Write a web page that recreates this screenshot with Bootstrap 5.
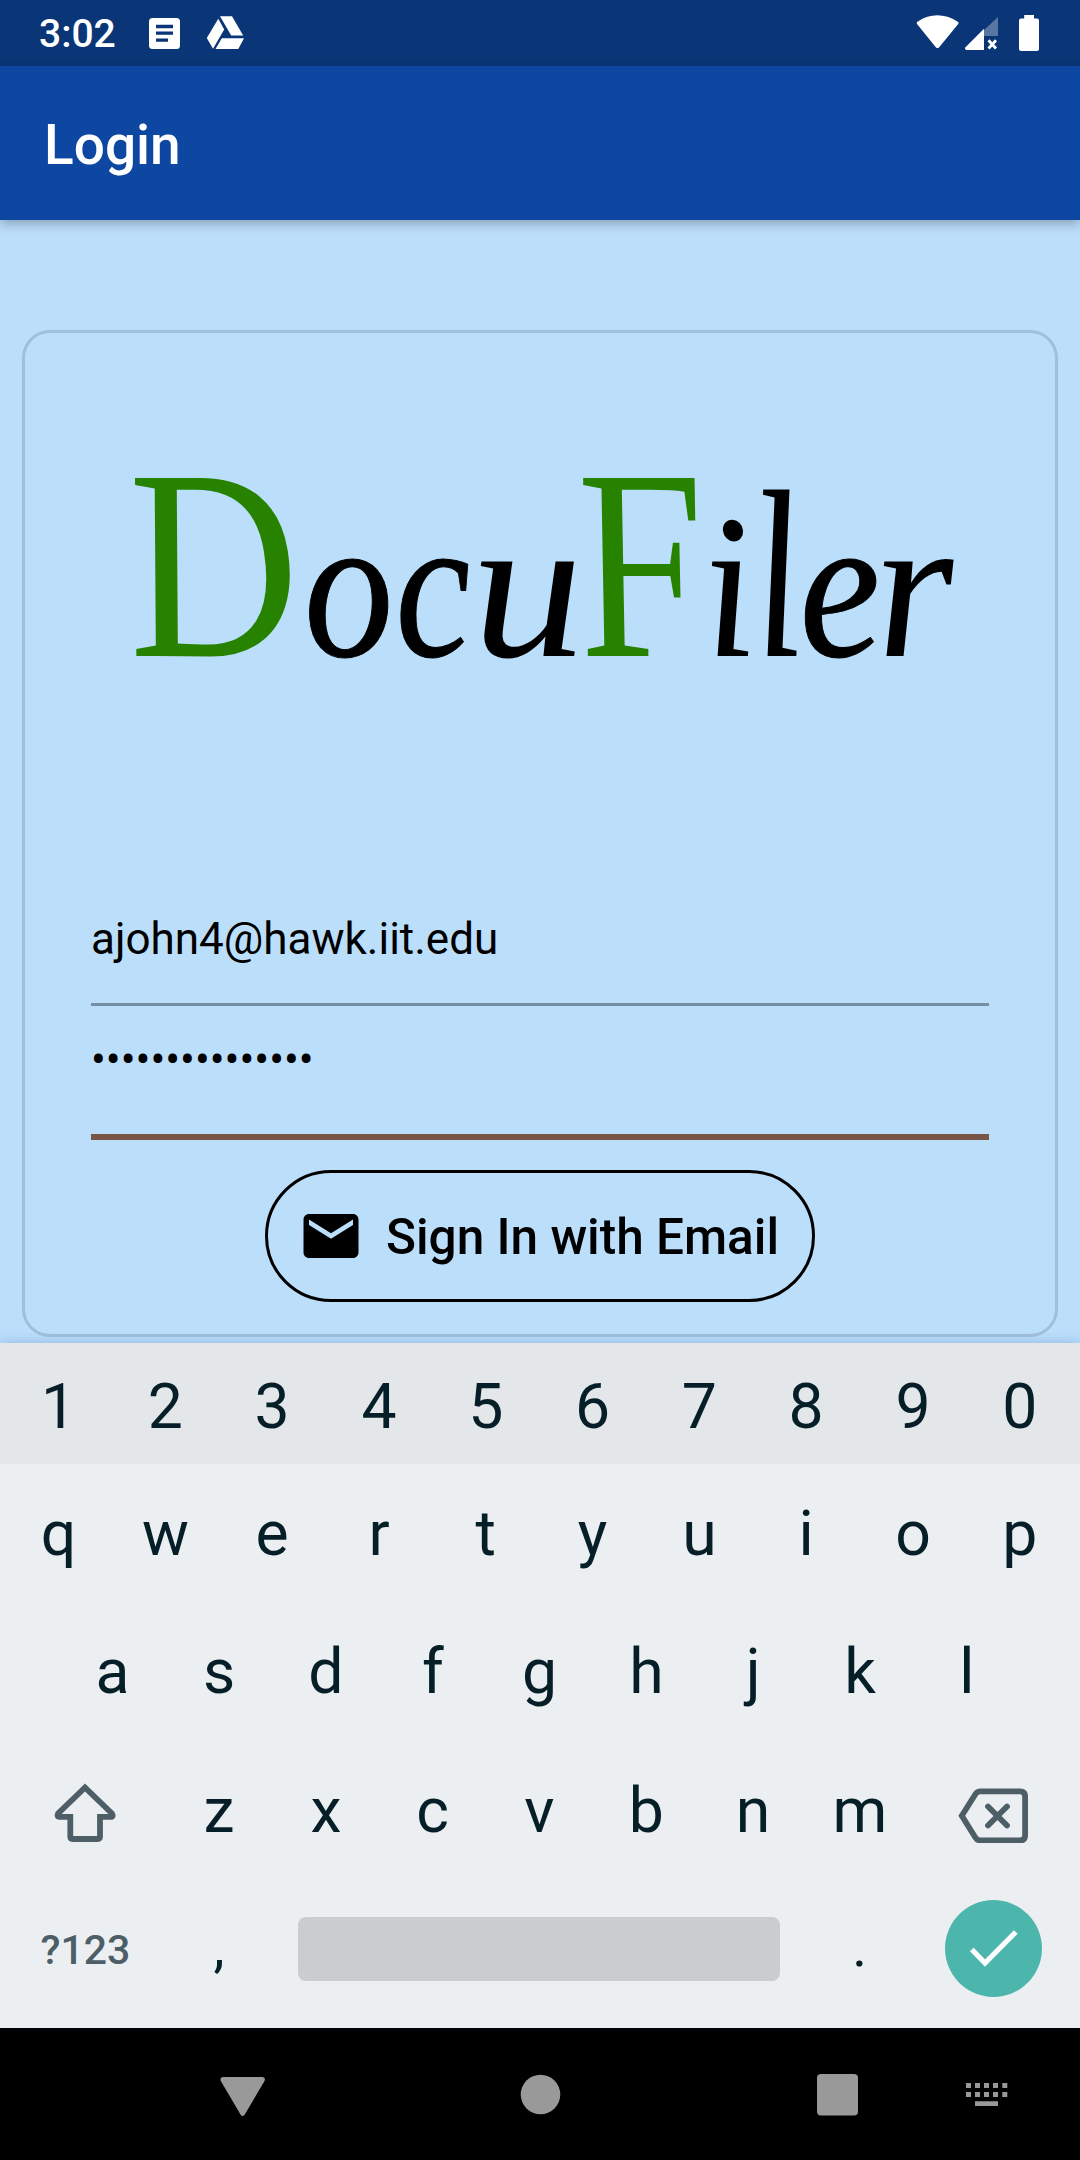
<!DOCTYPE html>
<html lang="en">
<head>
<meta charset="utf-8">
<title>Login</title>
<meta name="viewport" content="width=device-width, initial-scale=1">
<link href="https://cdn.jsdelivr.net/npm/bootstrap@5.3.0/dist/css/bootstrap.min.css" rel="stylesheet">
<style>
body{width:1080px;height:2160px;margin:0;overflow:hidden;font-family:Roboto,sans-serif;background:#bbdefb;color:#000;line-height:1.172}
svg{display:block;flex:none}
.status-bar{height:66px;background:#0a3576;padding:0 41px 0 39px}
.clock{font-size:39px;font-weight:500;width:110px;padding-top:4px}
.drive{margin-left:26px}
.app-bar{height:154px;background:#0d47a1;padding:4px 44px 0;box-shadow:0 4px 10px rgba(0,0,0,.26);z-index:1}
.app-title{font-size:55px;font-weight:500}
.screen{height:1123px;padding:110px 22px 0}
.login-card{height:1007px;border:3px solid #a0bfda;border-radius:28px;background:none;padding:0 66px}
.logo-box{height:555px;margin:0 -66px}
.field{font-size:44px;border:0;border-radius:0;background:none;padding:0;color:#000;line-height:52px;display:block;white-space:nowrap}
.field-email{height:118px;padding-top:25px;border-bottom:3px solid #768ea4}
.field-pass{height:134px;padding-top:28px;border-bottom:6px solid #795548}
.btn-email{width:550px;height:132px;margin:30px auto 0;border:3px solid #000;border-radius:66px;font-size:49.5px;font-weight:500;color:#000;padding:0 0 0 30px;gap:22px;white-space:nowrap}
.btn-email span{padding-top:2px}
.keyboard{height:685px;background:#eceff1;color:#061e28;font-size:62.5px;box-shadow:0 -1px 10px rgba(0,50,110,.2);z-index:1}
.num-row{height:121px;background:#e3e7ea;padding:7px 5.2px 0}
.key-row{height:138.5px;padding:0 5.2px}
.key-row.inset{padding:0 59px}
.key{width:106.8px;flex:none;text-align:center}
.key.punct{font-size:56px;padding-bottom:2px}
.key-wide{width:160.5px;flex:none;display:flex;justify-content:center}
.sym{font-size:41px;font-weight:500;color:#4d5e66;padding-top:2px}
.space{width:482px;height:64px;border-radius:8px;background:#c9cdd0;margin:0 26px 0 25.700px}
.enter{width:97px;height:97px;border-radius:50%;background:#4db6ac}
.nav-bar{height:132px;background:#000}
</style>
</head>
<body class="d-flex flex-column">
<header class="status-bar d-flex align-items-center">
  <span class="clock text-white">3:02</span>
  <svg width="31" height="66" viewBox="149 0 31 66"><rect x="149" y="18" width="31" height="31" rx="3.5" fill="#fff"/><path d="M156 26.5h17M156 33.2h17M156 40.2h12" stroke="#0a3576" stroke-width="3.3"/></svg>
  <svg class="drive me-auto" width="40" height="66" viewBox="206 0 40 66" fill="#fff"><path d="M220 16.2h12L243.2 35.500h-12z"/><path d="M218.300 18.800L224.200 29.500L213 48.700L206.800 38.100z"/><path d="M221.800 38.200H244L238.300 49H215.500z"/></svg>
  <svg width="124" height="66" viewBox="915 0 124 66" fill="#fff"><path d="M917 24Q916 22.700 917.500 21.700Q937 9 957.800 21.700Q959.300 22.700 958.200 24L939.200 47.200Q937.500 49 935.800 47.200z"/><path d="M984 30L998 17V36H984z" fill-opacity=".32"/><path d="M984 28.800V50H966.500Q964 49.300 965.500 47.300z"/><path d="M988.500 40.300l7.500 8.200M996 40.300l-7.500 8.200" stroke="#fff" stroke-width="2.800"/><path d="M1024.200 15h9.800v3.500h3q2 0 2 2V49q0 2-2 2h-16q-2 0-2-2V20.500q0-2 2-2h3.200z"/></svg>
</header>
<nav class="app-bar navbar d-flex align-items-center position-relative"><span class="app-title text-white">Login</span></nav>
<main class="screen">
  <section class="login-card card">
    <div class="logo-box">
      <svg width="1030" height="555" viewBox="25 333 1030 555" font-family="'Liberation Serif',serif" font-style="italic" font-size="200">
        <g fill="#278200">
          <text transform="translate(139 656) skewX(9) scale(1.17 1.36)">D</text>
          <text transform="translate(589 656) skewX(9) scale(1.08 1.36)">F</text>
        </g>
        <text transform="translate(307 656) skewX(4) scale(.9 1.03)" stroke="#000" stroke-width="1">o</text>
        <text transform="translate(398 656) skewX(4) scale(.88 1.03)" stroke="#000" stroke-width="1">c</text>
        <text transform="translate(474 656) skewX(3) scale(1.13 1.03)">u</text>
        <text transform="translate(707 656) skewX(5) scale(.95 1.03)">i</text>
        <text transform="translate(758 656) skewX(5) scale(.9 1.2)">l</text>
        <text transform="translate(802 656) skewX(4) scale(.94 1.03)" stroke="#000" stroke-width="1">e</text>
        <text transform="translate(878 656) skewX(4) scale(1.05 1.03)">r</text>
      </svg>
    </div>
    <div class="field field-email">ajohn4@hawk.iit.edu</div>
    <div class="field field-pass">•••••••••••••••</div>
    <button class="btn btn-email d-flex align-items-center" type="button">
      <svg width="66" height="66" viewBox="0 0 24 24"><path d="M20 4H4c-1.100 0-1.990.9-1.990 2L2 18c0 1.100.9 2 2 2h16c1.100 0 2-.9 2-2V6c0-1.100-.9-2-2-2zm0 4l-8 5-8-5V6l8 5 8-5v2z"/></svg>
      <span>Sign In with Email</span>
    </button>
  </section>
</main>
<section class="keyboard position-relative">
  <div class="num-row d-flex align-items-center"><span class="key">1</span><span class="key">2</span><span class="key">3</span><span class="key">4</span><span class="key">5</span><span class="key">6</span><span class="key">7</span><span class="key">8</span><span class="key">9</span><span class="key">0</span></div>
  <div class="key-row d-flex align-items-center"><span class="key">q</span><span class="key">w</span><span class="key">e</span><span class="key">r</span><span class="key">t</span><span class="key">y</span><span class="key">u</span><span class="key">i</span><span class="key">o</span><span class="key">p</span></div>
  <div class="key-row inset d-flex align-items-center"><span class="key">a</span><span class="key">s</span><span class="key">d</span><span class="key">f</span><span class="key">g</span><span class="key">h</span><span class="key">j</span><span class="key">k</span><span class="key">l</span></div>
  <div class="key-row d-flex align-items-center">
    <span class="key-wide"><svg width="66" height="70" viewBox="52.500 1775.500 66 70" fill="none" stroke="#4d5e66" stroke-width="5.800"><path d="M85.500 1788L58.600 1814Q57 1817.300 60 1817.300H70.800V1837Q70.800 1839.500 73 1839.500H98Q100.500 1839.500 100.500 1837V1817.300H111.300Q114.300 1817.300 112.400 1814z"/></svg></span>
    <span class="key">z</span><span class="key">x</span><span class="key">c</span><span class="key">v</span><span class="key">b</span><span class="key">n</span><span class="key">m</span>
    <span class="key-wide"><svg width="76" height="66" viewBox="955.500 1777.500 76 66" fill="none" stroke="#4d5e66" stroke-width="5.800"><path d="M961.300 1816.300L975 1794.500Q976.800 1791.800 980 1791.800H1019.500Q1024.600 1791.800 1024.600 1796.800V1836Q1024.600 1841 1019.500 1841H980Q976.800 1841 975 1838.200z"/><path d="M987.500 1807l19 19M1006.500 1807l-19 19" stroke-linecap="round"/></svg></span>
  </div>
  <div class="key-row d-flex align-items-center">
    <span class="key-wide sym">?123</span><span class="key punct">,</span><span class="space"></span><span class="key punct">.</span>
    <span class="key-wide"><span class="enter"><svg width="97" height="97" viewBox="945 1900 97 97"><path d="M971.800 1949.500L985 1963L1015.800 1932" fill="none" stroke="#fff" stroke-width="5.200"/></svg></span></span>
  </div>
</section>
<footer class="nav-bar">
  <svg width="1080" height="132" viewBox="0 2028 1080 132" fill="#999"><path d="M223 2077H262.500Q266 2077.500 264.500 2081L244.500 2115Q242.700 2117.200 240.800 2115L220.800 2081Q219.300 2077.500 223 2077z"/><circle cx="540.500" cy="2094.500" r="19.800"/><rect x="817" y="2074" width="41" height="41.500" rx="4"/><path d="M966 2083h5v5h-5zM975 2083h5v5h-5zM984 2083h5v5h-5zM993 2083h5v5h-5zM1002.300 2083h5v5h-5zM966 2092h5v5h-5zM975 2092h5v5h-5zM984 2092h5v5h-5zM993 2092h5v5h-5zM1002.300 2092h5v5h-5zM975 2101.300h23v4.700h-23z"/></svg>
</footer>
<script src="https://cdn.jsdelivr.net/npm/bootstrap@5.3.0/dist/js/bootstrap.bundle.min.js"></script>
</body>
</html>
